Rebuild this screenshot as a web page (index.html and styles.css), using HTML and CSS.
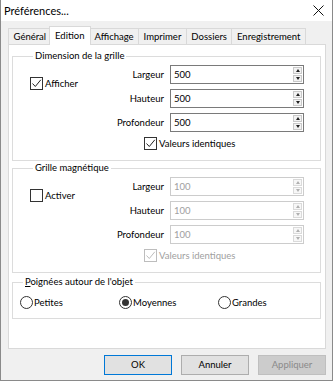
FILE: index.html
```html
<!DOCTYPE html>
<html lang="fr">
<head>
    <meta charset="UTF-8">
    <title>Préférences</title>
    <link rel="stylesheet" href="styles.css">
</head>
<body>
    <div class="window">
        <div class="titlebar">
            <span class="title">Préférences...</span>
            <svg class="close" width="11" height="11" viewBox="0 0 11 11">
                <path d="M0.5 0.5L10.5 10.5M10.5 0.5L0.5 10.5" stroke="#111" stroke-width="1"/>
            </svg>
        </div>

        <div class="main">
            <!-- Onglets -->
            <div class="tabs">
                <div class="tab">Général</div>
                <div class="tab active">Edition</div>
                <div class="tab">Affichage</div>
                <div class="tab">Imprimer</div>
                <div class="tab">Dossiers</div>
                <div class="tab">Enregistrement</div>
            </div>

            <div class="panel">
                <fieldset class="group">
                    <legend>Dimension de la grille</legend>
                    <div class="fields">
                        <div class="check side"><span class="box"><svg width="11" height="11" viewBox="0 0 11 11"><path d="M1.5 5.5L4.3 8.5L9.8 1.8" fill="none" stroke="#222" stroke-width="1"/></svg></span>Afficher</div>
                        <span class="lbl">Largeur</span>
                        <div class="spin"><span class="val">500</span><span class="arrows"><span class="up"></span><span class="down"></span></span></div>
                        <span class="lbl">Hauteur</span>
                        <div class="spin"><span class="val">500</span><span class="arrows"><span class="up"></span><span class="down"></span></span></div>
                        <span class="lbl">Profondeur</span>
                        <div class="spin"><span class="val">500</span><span class="arrows"><span class="up"></span><span class="down"></span></span></div>
                        <div class="check same"><span class="box"><svg width="11" height="11" viewBox="0 0 11 11"><path d="M1.5 5.5L4.3 8.5L9.8 1.8" fill="none" stroke="#222" stroke-width="1"/></svg></span>Valeurs identiques</div>
                    </div>
                </fieldset>

                <fieldset class="group">
                    <legend>Grille magnétique</legend>
                    <div class="fields">
                        <div class="check side"><span class="box"></span>Activer</div>
                        <span class="lbl">Largeur</span>
                        <div class="spin off"><span class="val">100</span><span class="arrows"><span class="up"></span><span class="down"></span></span></div>
                        <span class="lbl">Hauteur</span>
                        <div class="spin off"><span class="val">100</span><span class="arrows"><span class="up"></span><span class="down"></span></span></div>
                        <span class="lbl">Profondeur</span>
                        <div class="spin off"><span class="val">100</span><span class="arrows"><span class="up"></span><span class="down"></span></span></div>
                        <div class="check same off"><span class="box"><svg width="11" height="11" viewBox="0 0 11 11"><path d="M1.5 5.5L4.3 8.5L9.8 1.8" fill="none" stroke="#bdbdbd" stroke-width="1"/></svg></span>Valeurs identiques</div>
                    </div>
                </fieldset>

                <fieldset class="group handles">
                    <legend><u>P</u>oignées autour de l'objet</legend>
                    <div class="radios">
                        <div class="opt"><span class="radio"></span>Petites</div>
                        <div class="opt"><span class="radio on"></span>Moyennes</div>
                        <div class="opt"><span class="radio"></span>Grandes</div>
                    </div>
                </fieldset>
            </div>

            <div class="buttons">
                <div class="btn default">OK</div>
                <div class="btn">Annuler</div>
                <div class="btn disabled">Appliquer</div>
            </div>
        </div>
    </div>
</body>
</html>
```

FILE: styles.css
```css
body {
    margin: 0;
    background: #fff;
    font-family: Lato, "Liberation Sans", sans-serif;
    font-size: 9.5px;
    color: #000;
}

.window {
    width: 333px;
    height: 381px;
    box-sizing: border-box;
    border: 1px solid #8a8a8a;
    border-top: none;
    background: #f0f0f0;
}

.titlebar {
    height: 21px;
    background: #fff;
    display: flex;
    align-items: center;
    justify-content: space-between;
    padding: 0 8px 0 3px;
}

.title {
    font-size: 11px;
}

.main {
    padding: 5px 6px 0 7px;
}

/* Onglets */
.tabs {
    display: flex;
    align-items: flex-end;
    height: 18px;
    position: relative;
    z-index: 1;
}

.tab {
    height: 15px;
    line-height: 15px;
    padding: 0 4.5px;
    border: 1px solid #d9d9d9;
    border-bottom: none;
    margin-right: -1px;
    background: #f0f0f0;
}

.tab.active {
    height: 18px;
    line-height: 17px;
    margin: 0 -2px -1px -2px;
    padding: 0 5.5px;
    background: #fff;
    position: relative;
}

.panel {
    height: 305px;
    box-sizing: border-box;
    background: #fff;
    border: 1px solid #d9d9d9;
    padding: 5px 4px 0 3px;
}

.group {
    margin: 0 0 1px 0;
    padding: 3px 16px 10px 17px;
    border: 1px solid #dcdcdc;
}

.group legend {
    line-height: 12px;
    padding: 0 2px;
    margin-left: 3px;
}

.fields {
    display: grid;
    grid-template-columns: 1fr auto 134px;
    grid-template-rows: 19px 19px 19px 13px;
    column-gap: 6px;
    row-gap: 5px;
}

.lbl {
    grid-column: 2;
    text-align: right;
    align-self: center;
}

.check {
    display: flex;
    align-items: center;
}

.check.side {
    grid-column: 1;
    grid-row: 1 / 3;
    margin-bottom: 6px;
}

.check.same {
    grid-column: 1 / -1;
    padding-left: 114px;
}

.check.off {
    color: #a0a0a0;
}

.box {
    width: 11px;
    height: 11px;
    border: 1px solid #333;
    background: #fff;
    margin-right: 2px;
    display: flex;
}

.check.off .box {
    border-color: #bdbdbd;
}

/* Champs numériques */
.spin {
    grid-column: 3;
    display: flex;
    border: 1px solid #7a7a7a;
    background: #fff;
}

.val {
    flex: 1;
    padding-left: 3px;
    line-height: 17px;
}

.arrows {
    width: 9px;
    padding: 1px;
    display: flex;
    flex-direction: column;
    gap: 1px;
}

.arrows span {
    flex: 1;
    border: 1px solid #c9c9c9;
    background: #f2f2f2;
    display: flex;
    align-items: center;
    justify-content: center;
}

.arrows .up::before,
.arrows .down::before {
    content: "";
    border-left: 2.5px solid transparent;
    border-right: 2.5px solid transparent;
}

.arrows .up::before {
    border-bottom: 3px solid #222;
}

.arrows .down::before {
    border-top: 3px solid #222;
}

.spin.off {
    border-color: #cccccc;
    color: #a0a0a0;
}

.spin.off .arrows span {
    border-color: #dadada;
    background: #f7f7f7;
}

.spin.off .up::before {
    border-bottom-color: #b0b0b0;
}

.spin.off .down::before {
    border-top-color: #b0b0b0;
}

/* Poignées */
.group.handles {
    margin-top: 3px;
    padding: 8px 0 9px 7px;
}

.radios {
    display: grid;
    grid-template-columns: 99px 99px 99px;
}

.opt {
    display: flex;
    align-items: center;
}

.radio {
    width: 11px;
    height: 11px;
    border: 1px solid #333;
    border-radius: 50%;
    margin-right: 1px;
    display: flex;
    align-items: center;
    justify-content: center;
}

.radio.on::after {
    content: "";
    width: 7px;
    height: 7px;
    border-radius: 50%;
    background: #333;
}

/* Boutons */
.buttons {
    display: flex;
    justify-content: flex-end;
    gap: 9px;
    margin-top: 6px;
}

.btn {
    width: 68px;
    height: 20px;
    box-sizing: border-box;
    line-height: 18px;
    text-align: center;
    background: #e1e1e1;
    border: 1px solid #adadad;
}

.btn.default {
    border-color: #0078d7;
}

.btn.disabled {
    background: #cccccc;
    border-color: #bfbfbf;
    color: #8a8a8a;
}
```
